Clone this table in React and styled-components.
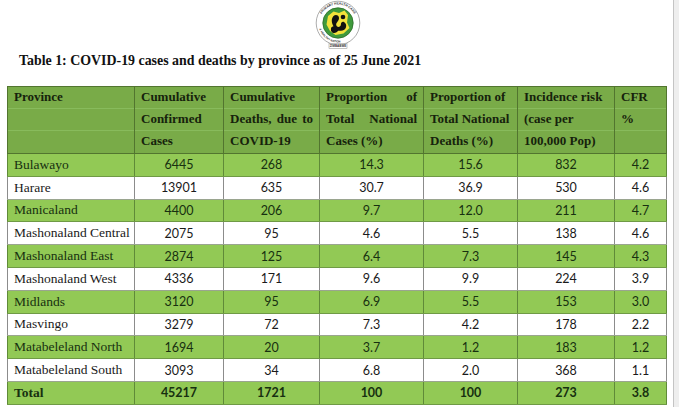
import React from 'react';
import styled, { createGlobalStyle } from 'styled-components';

const GlobalStyle = createGlobalStyle`
  html, body {
    margin: 0;
    padding: 0;
    background: #eeeeee;
  }
  #root {
    width: 679px;
    height: 407px;
    overflow: hidden;
  }
`;

const Page = styled.div`
  width: 673px;
  height: 407px;
  background: #ffffff;
  border-right: 1px solid #c4c4c4;
  display: flex;
  flex-direction: column;
`;

const LogoRow = styled.div`
  display: flex;
  justify-content: center;
  padding-left: 2px;
  height: 49px;
`;

const Title = styled.h1`
  margin: 2px 0 0 19px;
  font-family: "Liberation Serif", "Times New Roman", serif;
  font-weight: bold;
  font-size: 13.9px;
  line-height: 20px;
  color: #111;
`;

const Table = styled.table`
  margin: 15px 0 0 7px;
  width: 659px;
  border-collapse: collapse;
  table-layout: fixed;
`;

const HeadCell = styled.th`
  background: #79ab48;
  border: 1px solid #52752f;
  padding: 0;
  vertical-align: top;
  text-align: left;
  font-family: "Liberation Serif", "Times New Roman", serif;
  font-weight: bold;
  font-size: 13px;
  color: #16220c;
`;

const HeadLine = styled.div`
  height: 22px;
  line-height: 20px;
  padding: 0 6px;
  border-bottom: 1px solid ${p => (p.$last ? 'transparent' : 'rgba(150, 200, 110, 0.55)')};
  box-sizing: border-box;
  white-space: nowrap;
  text-align: ${p => (p.$justify ? 'justify' : 'left')};
  text-align-last: ${p => (p.$justify ? 'justify' : 'auto')};
`;

const Row = styled.tr`
  height: 22.8px;
  background: ${p => (p.$green ? '#92c955' : '#ffffff')};
`;

const Cell = styled.td`
  padding: 0 6px;
  border-left: 1px solid ${p => (p.$green ? '#5f8a38' : '#8c8c8c')};
  border-right: 1px solid ${p => (p.$green ? '#5f8a38' : '#8c8c8c')};
  border-bottom: 1px solid ${p => (p.$green ? '#6f9a45' : '#9aa58f')};
  box-sizing: border-box;
  white-space: nowrap;
  color: ${p => (p.$green ? '#173010' : '#1a1a1a')};
  font-weight: ${p => (p.$bold ? 'bold' : 'normal')};
`;

const NameCell = styled(Cell)`
  font-family: "Liberation Serif", "Times New Roman", serif;
  font-size: 13.5px;
  text-align: left;
`;

const NumCell = styled(Cell)`
  font-family: Lato, "Open Sans", sans-serif;
  font-size: 12.5px;
  text-align: center;
`;

function Logo() {
  return (
    <svg width="60" height="49" viewBox="0 0 60 49">
      <defs>
        <path id="arcTop" d="M11.5 23 A18.5 18.5 0 0 1 48.5 23" />
        <path id="arcBot" d="M10.5 23 A19.5 19.5 0 0 0 49.5 23" />
      </defs>
      <circle cx="30" cy="23" r="21.8" fill="#fff" stroke="#8a8a8a" strokeWidth="0.7" />
      <circle cx="30" cy="23" r="15.2" fill="#3f9a3c" stroke="#2d6e2b" strokeWidth="0.8" />
      <path
        d="M20 16 L25.5 11.5 L31 13 L36.5 10.5 L40 15 L39 22.5 L41.5 28 L35.5 33.5 L27.5 35 L22 31 L18.5 24.5 Z"
        fill="#f2e13a"
      />
      <path
        d="M25.5 16 c2 -2 5.5 -1 5.5 2 c0 3.5 -3.5 4.5 -2.7 7.3 c0.9 2.7 4.6 1.8 4.6 -0.9 c0 -2.8 2.8 -3.7 4.6 -0.9 c1.8 2.7 0 7.3 -4.6 7.3 l-2.8 0 c-0.9 1.8 -4.6 3.7 -6.4 0.9 c-1.8 -1.8 0 -5.5 1.8 -5.5 c-1.8 -2.7 -2.7 -7.3 0 -10.1 z"
        fill="#111"
      />
      <circle cx="35" cy="17" r="2.3" fill="#111" />
      <circle cx="24.5" cy="28.5" r="1.5" fill="#111" />
      <text fontSize="3.3" fontFamily="Liberation Sans, sans-serif" fontWeight="bold" fill="#333">
        <textPath href="#arcTop" startOffset="50%" textAnchor="middle">PRIMARY HEALTH CARE</textPath>
      </text>
      <text fontSize="2.8" fontFamily="Liberation Sans, sans-serif" fontWeight="bold" fill="#333">
        <textPath href="#arcBot" startOffset="32%" textAnchor="middle">&amp; HEALTHY NATION</textPath>
      </text>
      <rect x="21" y="43.5" width="18" height="5.2" fill="#fff" stroke="#888" strokeWidth="0.5" />
      <text x="30" y="47.3" fontSize="3" textAnchor="middle" fontFamily="Liberation Sans, sans-serif" fontWeight="bold" fill="#333">
        ZIMBABWE
      </text>
    </svg>
  );
}

const columns = [
  { width: 127, lines: ['Province', '', ''] },
  { width: 89, lines: ['Cumulative', 'Confirmed', 'Cases'] },
  { width: 96, lines: ['Cumulative', 'Deaths, due to', 'COVID-19'], justify: [false, true, false] },
  { width: 104, lines: ['Proportion of', 'Total National', 'Cases (%)'], justify: [true, true, false] },
  { width: 94, lines: ['Proportion of', 'Total National', 'Deaths (%)'] },
  { width: 97, lines: ['Incidence risk', '(case per', '100,000 Pop)'] },
  { width: 52, lines: ['CFR', '%', ''] },
];

const rows = [
  ['Bulawayo', '6445', '268', '14.3', '15.6', '832', '4.2'],
  ['Harare', '13901', '635', '30.7', '36.9', '530', '4.6'],
  ['Manicaland', '4400', '206', '9.7', '12.0', '211', '4.7'],
  ['Mashonaland Central', '2075', '95', '4.6', '5.5', '138', '4.6'],
  ['Mashonaland East', '2874', '125', '6.4', '7.3', '145', '4.3'],
  ['Mashonaland West', '4336', '171', '9.6', '9.9', '224', '3.9'],
  ['Midlands', '3120', '95', '6.9', '5.5', '153', '3.0'],
  ['Masvingo', '3279', '72', '7.3', '4.2', '178', '2.2'],
  ['Matabeleland North', '1694', '20', '3.7', '1.2', '183', '1.2'],
  ['Matabeleland South', '3093', '34', '6.8', '2.0', '368', '1.1'],
];

const total = ['Total', '45217', '1721', '100', '100', '273', '3.8'];

export default function App() {
  return (
    <>
      <GlobalStyle />
      <Page>
        <LogoRow>
          <Logo />
        </LogoRow>
        <Title>Table 1: COVID-19 cases and deaths by province as of 25 June 2021</Title>
        <Table>
          <colgroup>
            {columns.map((c, i) => (
              <col key={i} style={{ width: c.width }} />
            ))}
          </colgroup>
          <thead>
            <tr>
              {columns.map((c, i) => (
                <HeadCell key={i}>
                  {c.lines.map((line, j) => (
                    <HeadLine key={j} $last={j === 2} $justify={c.justify && c.justify[j]}>
                      {line || '\u00a0'}
                    </HeadLine>
                  ))}
                </HeadCell>
              ))}
            </tr>
          </thead>
          <tbody>
            {rows.map((r, i) => {
              const green = i % 2 === 0;
              return (
                <Row key={r[0]} $green={green}>
                  <NameCell $green={green}>{r[0]}</NameCell>
                  {r.slice(1).map((v, j) => (
                    <NumCell key={j} $green={green}>{v}</NumCell>
                  ))}
                </Row>
              );
            })}
            <Row $green>
              <NameCell $green $bold>{total[0]}</NameCell>
              {total.slice(1).map((v, j) => (
                <NumCell key={j} $green $bold>{v}</NumCell>
              ))}
            </Row>
          </tbody>
        </Table>
      </Page>
    </>
  );
}
